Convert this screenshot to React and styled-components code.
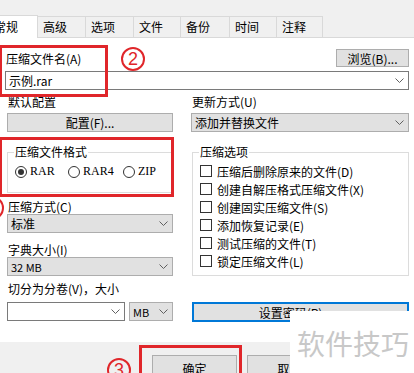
import styled, { createGlobalStyle } from "styled-components";

const RED = "#e0262a";

const GlobalStyle = createGlobalStyle`
  body {
    margin: 0;
    background: #f0f0f0;
    font-family: "Noto Sans CJK SC", "Noto Sans", sans-serif;
    font-size: 12px;
    color: #000;
  }
`;

const tabs = [
  { label: "常规", w: 50 },
  { label: "高级", w: 49 },
  { label: "选项", w: 49 },
  { label: "文件", w: 48 },
  { label: "备份", w: 50 },
  { label: "时间", w: 48 },
  { label: "注释", w: 47 },
];

const options = [
  "压缩后删除原来的文件(D)",
  "创建自解压格式压缩文件(X)",
  "创建固实压缩文件(S)",
  "添加恢复记录(E)",
  "测试压缩的文件(T)",
  "锁定压缩文件(L)",
];

const Page = styled.div`
  position: relative;
  width: 414px;
  height: 373px;
  overflow: hidden;
  background: #f0f0f0;
  display: flex;
  flex-direction: column;
`;

const TopStrip = styled.div`
  flex: none;
  height: 15px;
`;

const TabBar = styled.div`
  flex: none;
  display: flex;
  align-items: flex-end;
  height: 22px;
  border-bottom: 1px solid #d9d9d9;
`;

const Tab = styled.div`
  position: relative;
  z-index: ${(p) => (p.$active ? 1 : 0)};
  flex: none;
  box-sizing: border-box;
  width: ${(p) => p.$w}px;
  height: ${(p) => (p.$active ? 23 : 21)}px;
  margin-bottom: ${(p) => (p.$active ? -1 : 0)}px;
  margin-left: ${(p) => (p.$first ? -12 : 0)}px;
  margin-right: -1px;
  padding: ${(p) => (p.$active ? 1 : 0)}px 0 0 5px;
  border: 1px solid #d9d9d9;
  border-bottom: none;
  background: ${(p) => (p.$active ? "#fff" : "#f0f0f0")};
  line-height: 20px;
  white-space: nowrap;
`;

const Panel = styled.div`
  flex: none;
  box-sizing: border-box;
  height: 304px;
  padding: 11px 5px 0 5px;
  background: #fff;
  display: flex;
  flex-direction: column;
`;

const FileRow = styled.div`
  display: flex;
  align-items: center;
  justify-content: space-between;
  height: 18px;
`;

const Label = styled.div`
  height: ${(p) => p.$h || 15}px;
  line-height: ${(p) => p.$h || 15}px;
  margin-top: ${(p) => p.$mt || 0}px;
  padding-left: 1px;
  white-space: nowrap;
`;

const PushButton = styled.div`
  box-sizing: border-box;
  width: ${(p) => (p.$w ? `${p.$w}px` : "100%")};
  height: ${(p) => p.$h || 19}px;
  margin-top: ${(p) => p.$mt || 0}px;
  background: #e1e1e1;
  border: 1px solid #adadad;
  display: flex;
  align-items: center;
  justify-content: center;
  white-space: nowrap;
`;

const Combo = styled.div`
  box-sizing: border-box;
  flex: none;
  width: ${(p) => (p.$w ? `${p.$w}px` : "100%")};
  height: 19px;
  margin-top: ${(p) => p.$mt || 0}px;
  padding: 0 4px 0 ${(p) => p.$pl || 3}px;
  background: ${(p) => (p.$edit ? "#fff" : "#e1e1e1")};
  border: 1px solid ${(p) => (p.$edit ? "#7a7a7a" : "#adadad")};
  display: flex;
  align-items: center;
  justify-content: space-between;
  font-size: ${(p) => p.$fs || 12}px;
  white-space: nowrap;
`;

const Columns = styled.div`
  display: flex;
  gap: 18px;
  padding-left: 2px;
`;

const Column = styled.div`
  flex: none;
  width: ${(p) => p.$w}px;
  display: flex;
  flex-direction: column;
`;

const GroupBox = styled.div`
  box-sizing: border-box;
  margin-top: 20px;
  margin-left: ${(p) => p.$ml || 0}px;
  padding: 0 0 ${(p) => p.$pb}px 6px;
  border: 1px solid #dcdcdc;
  display: flex;
  flex-direction: column;
`;

const Legend = styled.div`
  align-self: flex-start;
  height: 18px;
  line-height: 18px;
  margin-top: -10px;
  padding: 0 1px;
  background: #fff;
`;

const RadioRow = styled.div`
  display: flex;
  height: 13px;
  margin: 4px 0 0 1px;
`;

const RadioItem = styled.div`
  flex: none;
  width: ${(p) => p.$w}px;
  display: flex;
  align-items: center;
  gap: 3px;
  font-family: "Liberation Serif", serif;
  font-size: 12px;
`;

const RadioCircle = styled.span`
  box-sizing: border-box;
  width: 12px;
  height: 12px;
  border: 1px solid #333;
  border-radius: 50%;
  background: #fff;
  display: flex;
  align-items: center;
  justify-content: center;

  &::after {
    content: "";
    width: 6px;
    height: 6px;
    border-radius: 50%;
    background: ${(p) => (p.$on ? "#333" : "transparent")};
  }
`;

const CheckList = styled.div`
  margin: 1px 0 0 1px;
  display: flex;
  flex-direction: column;
`;

const CheckRow = styled.div`
  height: 18px;
  display: flex;
  align-items: center;
  gap: 5px;
  white-space: nowrap;
`;

const CheckBox = styled.span`
  box-sizing: border-box;
  flex: none;
  width: 12px;
  height: 12px;
  border: 1px solid #333;
  background: #fff;
`;

const SizeRow = styled.div`
  display: flex;
  gap: 4px;
  margin-top: 6px;
`;

const PassButton = styled.div`
  box-sizing: border-box;
  width: 217px;
  height: 20px;
  margin: 26px 0 0 1px;
  padding-right: 20px;
  background: #e1e1e1;
  border: 2px solid #0078d7;
  display: flex;
  align-items: center;
  justify-content: center;
`;

const Footer = styled.div`
  flex: 1;
  display: flex;
  gap: 10px;
  padding: 13px 0 0 152px;
`;

const DialogButton = styled.div`
  box-sizing: border-box;
  flex: none;
  width: 85px;
  height: 26px;
  background: #e1e1e1;
  border: 1px solid #adadad;
  display: flex;
  align-items: center;
  justify-content: center;
  font-size: 12px;
`;

const Mark = styled.div`
  position: absolute;
  box-sizing: border-box;
  left: ${(p) => p.$x}px;
  top: ${(p) => p.$y}px;
  width: ${(p) => p.$w}px;
  height: ${(p) => p.$h}px;
  border: 3px solid ${RED};
  pointer-events: none;
`;

const CircleNum = styled.div`
  position: absolute;
  box-sizing: border-box;
  left: ${(p) => p.$x}px;
  top: ${(p) => p.$y}px;
  width: 24px;
  height: 24px;
  border: 2px solid ${RED};
  border-radius: 50%;
  color: ${RED};
  font-family: "Liberation Sans", sans-serif;
  font-size: 18px;
  line-height: 20px;
  text-align: center;
`;

const Watermark = styled.div`
  position: absolute;
  left: 290px;
  top: 311px;
  right: 0;
  bottom: 0;
  background: #fff;
  display: flex;
  align-items: center;
  padding: 2px 0 0 7px;
  font-size: 28px;
  letter-spacing: 0;
  color: #c8c8c8;
  white-space: nowrap;
`;

const Chevron = () => (
  <svg width="9" height="5" viewBox="0 0 9 5">
    <polyline points="0.5,0.5 4.5,4.5 8.5,0.5" fill="none" stroke="#606060" strokeWidth="1" />
  </svg>
);

export default function App() {
  return (
    <Page>
      <GlobalStyle />
      <TopStrip />
      <TabBar>
        {tabs.map((t, i) => (
          <Tab key={t.label} $w={t.w} $active={i === 0} $first={i === 0}>
            {t.label}
          </Tab>
        ))}
      </TabBar>
      <Panel>
        <FileRow>
          <Label>压缩文件名(A)</Label>
          <PushButton $w={73} $h={18}>浏览(B)...</PushButton>
        </FileRow>
        <Combo $edit $mt={4}>
          <span>示例.rar</span>
          <Chevron />
        </Combo>
        <Columns>
          <Column $w={166}>
            <Label $h={16} $mt={4}>默认配置</Label>
            <PushButton $mt={3}>配置(F)...</PushButton>
            <GroupBox $pb={14}>
              <Legend>压缩文件格式</Legend>
              <RadioRow>
                <RadioItem $w={53}><RadioCircle $on />RAR</RadioItem>
                <RadioItem $w={55}><RadioCircle />RAR4</RadioItem>
                <RadioItem $w={40}><RadioCircle />ZIP</RadioItem>
              </RadioRow>
            </GroupBox>
            <Label $mt={6}>压缩方式(C)</Label>
            <Combo>
              <span>标准</span>
              <Chevron />
            </Combo>
            <Label $mt={9}>字典大小(I)</Label>
            <Combo $fs={11}>
              <span>32 MB</span>
              <Chevron />
            </Combo>
            <Label $mt={5}>切分为分卷(V)，大小</Label>
            <SizeRow>
              <Combo $edit $w={118}>
                <span />
                <Chevron />
              </Combo>
              <Combo $w={44} $fs={11}>
                <span>MB</span>
                <Chevron />
              </Combo>
            </SizeRow>
          </Column>
          <Column $w={218}>
            <Label $h={16} $mt={4}>更新方式(U)</Label>
            <Combo $mt={3}>
              <span>添加并替换文件</span>
              <Chevron />
            </Combo>
            <GroupBox $pb={5} $ml={1}>
              <Legend>压缩选项</Legend>
              <CheckList>
                {options.map((o) => (
                  <CheckRow key={o}>
                    <CheckBox />
                    {o}
                  </CheckRow>
                ))}
              </CheckList>
            </GroupBox>
            <PassButton>设置密码(P)</PassButton>
          </Column>
        </Columns>
      </Panel>
      <Footer>
        <DialogButton>确定</DialogButton>
        <DialogButton>取消</DialogButton>
      </Footer>

      <Mark $x={-1} $y={45} $w={109} $h={52} />
      <Mark $x={-1} $y={137} $w={175} $h={60} />
      <Mark $x={139} $y={345} $w={103} $h={40} />
      <CircleNum $x={121} $y={47}>2</CircleNum>
      <CircleNum $x={-20} $y={196}>1</CircleNum>
      <CircleNum $x={107} $y={358}>3</CircleNum>
      <Watermark>软件技巧</Watermark>
    </Page>
  );
}
